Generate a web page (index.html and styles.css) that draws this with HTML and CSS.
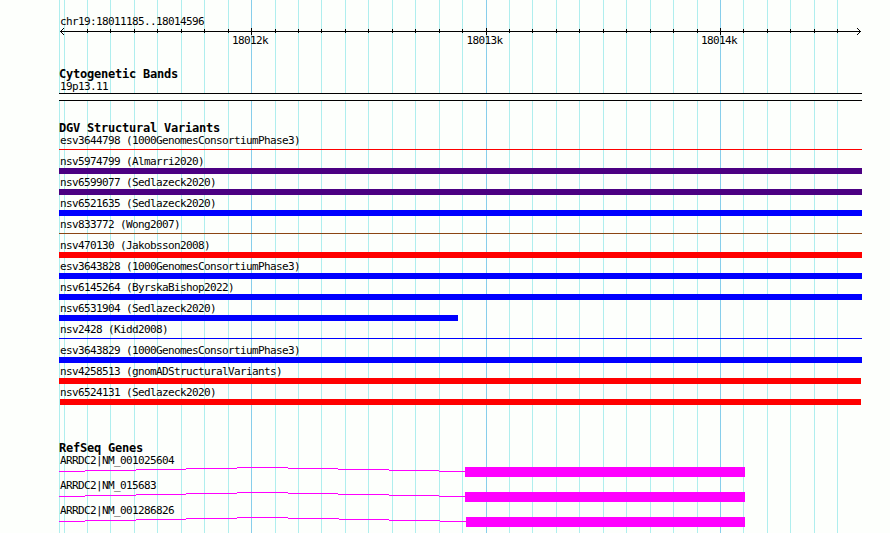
FILE: index.html
```html
<!DOCTYPE html>
<html lang="en">
<head>
<meta charset="utf-8">
<title>chr19:18011185..18014596</title>
<link rel="stylesheet" href="styles.css">
</head>
<body>
<main class="browser">
  <svg class="grid" width="890" height="533" aria-hidden="true">
    <path class="grid-minor" d="M59.5 0V533M64.5 0V533M87.5 0V533M110.5 0V533M134.5 0V533M157.5 0V533M181.5 0V533M204.5 0V533M228.5 0V533M275.5 0V533M298.5 0V533M321.5 0V533M345.5 0V533M368.5 0V533M392.5 0V533M415.5 0V533M439.5 0V533M462.5 0V533M509.5 0V533M532.5 0V533M556.5 0V533M579.5 0V533M603.5 0V533M626.5 0V533M650.5 0V533M673.5 0V533M697.5 0V533M743.5 0V533M767.5 0V533M790.5 0V533M814.5 0V533M837.5 0V533"/>
    <path class="grid-major" d="M251.5 0V533M486.5 0V533M720.5 0V533"/>
  </svg>

  <header class="ruler">
    <div class="label">chr19:18011185..18014596</div>
    <svg class="axis" width="803" height="7" viewBox="59 28 803 7">
      <path d="M60 31.5H861M87.5 29V33M110.5 29V33M134.5 29V33M157.5 29V33M181.5 29V33M204.5 29V33M228.5 29V33M275.5 29V33M298.5 29V33M321.5 29V33M345.5 29V33M368.5 29V33M392.5 29V33M415.5 29V33M439.5 29V33M462.5 29V33M509.5 29V33M532.5 29V33M556.5 29V33M579.5 29V33M603.5 29V33M626.5 29V33M650.5 29V33M673.5 29V33M697.5 29V33M743.5 29V33M767.5 29V33M790.5 29V33M814.5 29V33M837.5 29V33M251.5 28V35M486.5 28V35M720.5 28V35"/>
      <path d="M61 30.5H62M62 29.5H63M63 28.5H64M61 32.5H62M62 33.5H63M63 34.5H64M859 30.5H860M858 29.5H859M857 28.5H858M859 32.5H860M858 33.5H859M857 34.5H858"/>
    </svg>
    <div class="ticks"><span>18012k</span><span>18013k</span><span>18014k</span></div>
  </header>

  <section class="track bands">
    <h2>Cytogenetic Bands</h2>
    <div class="label">19p13.11</div>
    <div class="band"></div>
  </section>

  <section class="track variants">
    <h2>DGV Structural Variants</h2>
    <div class="variant"><div class="label">esv3644798 (1000GenomesConsortiumPhase3)</div><div class="thin red"></div></div>
    <div class="variant"><div class="label">nsv5974799 (Almarri2020)</div><div class="bar purple"></div></div>
    <div class="variant"><div class="label">nsv6599077 (Sedlazeck2020)</div><div class="bar purple"></div></div>
    <div class="variant"><div class="label">nsv6521635 (Sedlazeck2020)</div><div class="bar blue"></div></div>
    <div class="variant"><div class="label">nsv833772 (Wong2007)</div><div class="thin brown"></div></div>
    <div class="variant"><div class="label">nsv470130 (Jakobsson2008)</div><div class="bar red"></div></div>
    <div class="variant"><div class="label">esv3643828 (1000GenomesConsortiumPhase3)</div><div class="bar blue"></div></div>
    <div class="variant"><div class="label">nsv6145264 (ByrskaBishop2022)</div><div class="bar blue"></div></div>
    <div class="variant"><div class="label">nsv6531904 (Sedlazeck2020)</div><div class="bar blue partial"></div></div>
    <div class="variant"><div class="label">nsv2428 (Kidd2008)</div><div class="thin blue"></div></div>
    <div class="variant"><div class="label">esv3643829 (1000GenomesConsortiumPhase3)</div><div class="bar blue"></div></div>
    <div class="variant"><div class="label">nsv4258513 (gnomADStructuralVariants)</div><div class="bar red trim-end"></div></div>
    <div class="variant"><div class="label">nsv6524131 (Sedlazeck2020)</div><div class="bar red trim-end trim-start"></div></div>
  </section>

  <section class="track genes">
    <h2>RefSeq Genes</h2>
    <div class="gene">
      <div class="label">ARRDC2|NM_001025604</div>
      <svg width="803" height="10" viewBox="59 0 803 10"><path d="M59 4.5H85M85 3.5H136M136 2.5H186M186 1.5H237M237 .5H288M288 1.5H338M338 2.5H389M389 3.5H439M439 4.5H465"/><rect x="465" width="280" height="10"/></svg>
    </div>
    <div class="gene">
      <div class="label">ARRDC2|NM_015683</div>
      <svg width="803" height="10" viewBox="59 0 803 10"><path d="M59 4.5H85M85 3.5H136M136 2.5H186M186 1.5H237M237 .5H288M288 1.5H338M338 2.5H389M389 3.5H439M439 4.5H465"/><rect x="465" width="280" height="10"/></svg>
    </div>
    <div class="gene">
      <div class="label">ARRDC2|NM_001286826</div>
      <svg width="803" height="10" viewBox="59 0 803 10"><path d="M59 4.5H85M85 3.5H136M136 2.5H186M186 1.5H237M237 .5H288M288 1.5H339M339 2.5H389M389 3.5H440M440 4.5H466"/><rect x="466" width="279" height="10"/></svg>
    </div>
  </section>
</main>
</body>
</html>
```
FILE: styles.css
```css
body {
  margin: 0;
  background: #fdfffc;
  color: #000;
}

.browser {
  position: relative;
  box-sizing: border-box;
  width: 890px;
  height: 533px;
  padding: 15px 28px 0 59px;
  overflow: hidden;
  font: 11px/13px "DejaVu Sans Mono", monospace;
  letter-spacing: -0.622px;
}

svg {
  display: block;
  shape-rendering: crispEdges;
}

.grid {
  position: absolute;
  top: 0;
  left: 0;
}

.grid-minor { stroke: #afeeee; }
.grid-major { stroke: #87ceeb; }

.ruler,
.track {
  position: relative;
}

.label {
  height: 13px;
  padding-left: 1px;
  white-space: pre;
}

.axis { stroke: #000; }

.ticks {
  display: flex;
  justify-content: space-between;
  width: 505px;
  height: 13px;
  margin: -1px 0 0 173px;
}

h2 {
  height: 12px;
  margin: 0;
  font-size: 12px;
  line-height: 12px;
  font-weight: bold;
  letter-spacing: -0.224px;
}

.bands { margin-top: 21px; }

.band {
  box-sizing: border-box;
  height: 8px;
  border: solid #000;
  border-width: 1px 0;
  background: #fdfffc;
}

.variants { margin-top: 21px; }

.variant { height: 21px; }

.bar { height: 6px; }

.thin {
  height: 1px;
  margin-top: 2px;
}

.red { background: #f00; }
.blue { background: #00f; }
.purple { background: #4b0082; }
.brown { background: #8b4513; }

.partial { width: 399px; }
.trim-end { margin-right: 1px; }
.trim-start { margin-left: 1px; }

.genes { margin-top: 35px; }

.gene { height: 25px; }

.gene path { stroke: #f0f; }
.gene rect { fill: #f0f; }
```
